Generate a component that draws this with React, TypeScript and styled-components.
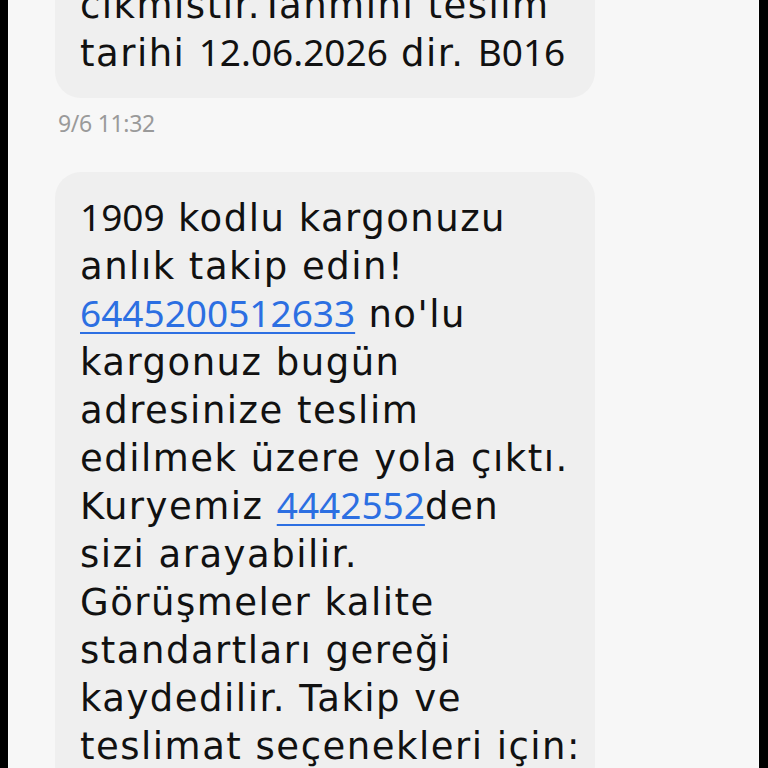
import React from "react";
import styled, { createGlobalStyle } from "styled-components";

const GlobalStyle = createGlobalStyle`
  html, body {
    margin: 0;
    padding: 0;
    background: #000;
  }
  body {
    font-family: "DejaVu Sans", "Noto Sans", sans-serif;
  }
`;

const Screen = styled.div`
  margin: 0 9px 0 8px;
  height: 768px;
  overflow: hidden;
  background: #f7f7f7;
  border-left: 1px solid #fbfbfb;
  border-right: 1px solid #fbfbfb;
`;

const Thread = styled.div`
  display: flex;
  flex-direction: column;
  align-items: flex-start;
  margin-top: -41px;
  padding-left: 46px;
`;

const Bubble = styled.div<{ $gap?: number }>`
  box-sizing: border-box;
  width: 540px;
  padding: 23px 25px 20px;
  border-radius: 26px;
  background: #efefef;
  color: #111;
  font-size: 37px;
  line-height: 48px;
  letter-spacing: 1.5px;
  margin-top: ${(p) => p.$gap ?? 0}px;
`;

const Line = styled.div`
  white-space: nowrap;
`;

// digits in the screenshot are narrower than the letters
const Num = styled.span`
  font-family: "Noto Sans", sans-serif;
  font-size: 37px;
  line-height: 1;
  letter-spacing: 0;
`;

const Link = styled(Num)`
  color: #2c6fe2;
  text-decoration: underline;
  text-decoration-thickness: 2px;
  text-underline-offset: 5px;
`;

const Stamp = styled.div`
  margin: 13px 0 0 3px;
  color: #9a9a9a;
  font-family: "Noto Sans", sans-serif;
  font-size: 23px;
  line-height: 24px;
  letter-spacing: -0.3px;
`;

export default function App() {
  return (
    <>
      <GlobalStyle />
      <Screen>
        <Thread>
          <Bubble>
            <Line>cikmistir.Tahmini teslim</Line>
            <Line>
              tarihi <Num>12.06.2026</Num> dir. <Num>B016</Num>
            </Line>
          </Bubble>
          <Stamp>9/6 11:32</Stamp>
          <Bubble $gap={37}>
            <Line>
              <Num>1909</Num> kodlu kargonuzu
            </Line>
            <Line>anlık takip edin!</Line>
            <Line>
              <Link>6445200512633</Link> no'lu
            </Line>
            <Line>kargonuz bugün</Line>
            <Line>adresinize teslim</Line>
            <Line>edilmek üzere yola çıktı.</Line>
            <Line>
              Kuryemiz <Link>4442552</Link>den
            </Line>
            <Line>sizi arayabilir.</Line>
            <Line>Görüşmeler kalite</Line>
            <Line>standartları gereği</Line>
            <Line>kaydedilir. Takip ve</Line>
            <Line>teslimat seçenekleri için:</Line>
          </Bubble>
        </Thread>
      </Screen>
    </>
  );
}
